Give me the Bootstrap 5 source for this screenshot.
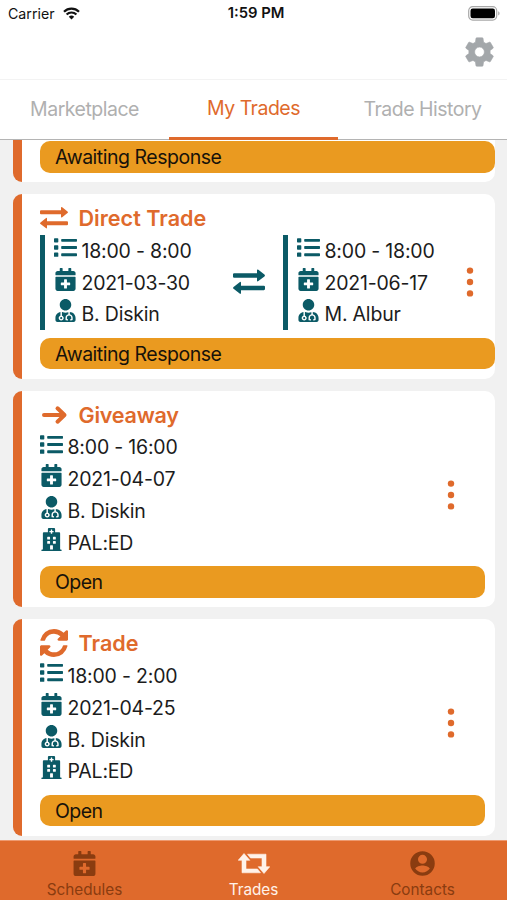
<!DOCTYPE html>
<html lang="en">
<head>
<meta charset="utf-8">
<meta name="viewport" content="width=device-width, initial-scale=1">
<title>My Trades</title>
<link href="https://cdn.jsdelivr.net/npm/bootstrap@5.3.0/dist/css/bootstrap.min.css" rel="stylesheet">
<style>
:root{--rust:#df6a2c;--teal:#0b5a66;--amber:#ea9a20}
body{font-family:Inter,"Liberation Sans",sans-serif;color:#1c1c1c;background:#f1f1f1}
svg{display:block;fill:currentColor;flex:none}
.screen{height:900px}
.status{height:27px;font-size:14.2px;color:#111;padding:0 7px 0 8px}
.status>div{flex:1 1 0}
.clock{font-size:14.8px;padding-left:4px}
.toolbar{height:53px;border-bottom:1px solid #f3f3f3;padding:0 13px 3px 0;color:#a3a7aa}
.tabs{height:60px}
.tabs a{flex:1 1 0;color:#b0b0b0;font-size:19.5px;letter-spacing:-.5px;line-height:58px;text-align:center;text-decoration:none;border-bottom:1px solid #b4b4b4;white-space:nowrap}
.tabs a.current{color:var(--rust);border-bottom:3px solid var(--rust);line-height:56px}
.feed{min-height:0;background:#f1f1f1}
.trade{margin:0 12px 12px 13px;border-left:9px solid var(--rust);border-radius:9px 10px 10px 9px;background:#fff;padding:8px 0 9.3px 18px}
.trade.cut{height:42px;padding-top:1.4px;border-top-left-radius:0;border-top-right-radius:0}
.heading{height:32.5px;gap:10.5px;color:var(--rust);font-weight:600;font-size:21.6px}
.heading.tight span{letter-spacing:-.25px}
.line{height:31.8px;font-size:19.5px;letter-spacing:-.2px;gap:4.500px;padding-top:2px;white-space:nowrap}
.line svg{color:var(--teal);margin-top:-8px}
.side{border-left:5px solid var(--teal);padding-left:9px}
.side.first{width:193px}
.side.second{margin-left:18px}
.between{color:var(--teal)}
.pill{height:31.5px;margin-top:8px;border-radius:10px;background:var(--amber);padding-left:15px;font-size:19.5px;letter-spacing:-.48px;line-height:32.500px;color:#17120a}
.pill.short{letter-spacing:-.6px}
.inset .pill{margin-right:10px}
.dots{color:var(--rust);margin-right:21px}
.inset .dots{margin-right:40.500px}
.bottom{height:60px;background:var(--rust);border-top:1px solid #ee9a70;color:#8a3c10;font-size:15.3px}
.bottom>div{flex:1 1 0;line-height:20px}
.bottom svg{margin:10px 0 4px}
.bottom .current{color:#fff2ea}
</style>
</head>
<body>
<svg width="0" height="0" class="position-absolute">
<defs>
<symbol id="list" viewBox="0 0 512 512"><path d="M80 368H16a16 16 0 0 0-16 16v64a16 16 0 0 0 16 16h64a16 16 0 0 0 16-16v-64a16 16 0 0 0-16-16zm0-320H16A16 16 0 0 0 0 64v64a16 16 0 0 0 16 16h64a16 16 0 0 0 16-16V64a16 16 0 0 0-16-16zm0 160H16a16 16 0 0 0-16 16v64a16 16 0 0 0 16 16h64a16 16 0 0 0 16-16v-64a16 16 0 0 0-16-16zm416 176H176a16 16 0 0 0-16 16v32a16 16 0 0 0 16 16h320a16 16 0 0 0 16-16v-32a16 16 0 0 0-16-16zm0-320H176a16 16 0 0 0-16 16v32a16 16 0 0 0 16 16h320a16 16 0 0 0 16-16V80a16 16 0 0 0-16-16zm0 160H176a16 16 0 0 0-16 16v32a16 16 0 0 0 16 16h320a16 16 0 0 0 16-16v-32a16 16 0 0 0-16-16z"/></symbol>
<symbol id="cal" viewBox="0 0 448 512"><path d="M436 160H12c-6.6 0-12-5.4-12-12v-36c0-26.5 21.5-48 48-48h48V12c0-6.600 5.400-12 12-12h40c6.600 0 12 5.400 12 12v52h128V12c0-6.600 5.400-12 12-12h40c6.600 0 12 5.400 12 12v52h48c26.500 0 48 21.500 48 48v36c0 6.600-5.400 12-12 12zM12 192h424c6.600 0 12 5.400 12 12v260c0 26.500-21.500 48-48 48H48c-26.500 0-48-21.500-48-48V204c0-6.600 5.400-12 12-12zm316 140c0-6.600-5.400-12-12-12h-60v-60c0-6.600-5.400-12-12-12h-40c-6.600 0-12 5.400-12 12v60h-60c-6.600 0-12 5.400-12 12v40c0 6.600 5.400 12 12 12h60v60c0 6.600 5.400 12 12 12h40c6.600 0 12-5.400 12-12v-60h60c6.600 0 12-5.400 12-12v-40z"/></symbol>
<symbol id="medic" viewBox="0 0 448 512"><path d="M224 256c70.700 0 128-57.300 128-128S294.700 0 224 0 96 57.300 96 128s57.300 128 128 128zM104 424c0 13.300 10.700 24 24 24s24-10.700 24-24-10.700-24-24-24-24 10.700-24 24zm216-135.400v49c36.500 7.400 64 39.800 64 78.400v41.700c0 7.600-5.400 14.200-12.900 15.700l-32.200 6.400c-4.300.9-8.500-1.900-9.400-6.300l-3.100-15.700c-.9-4.300 1.900-8.600 6.300-9.400l19.300-3.900V416c0-62.800-96-65.100-96 1.900v26.700l19.300 3.900c4.300.9 7.100 5.100 6.300 9.400l-3.100 15.700c-.9 4.300-5.100 7.100-9.400 6.300l-31.200-4.200c-7.900-1.100-13.800-7.800-13.800-15.900V416c0-38.600 27.500-70.900 64-78.400v-45.200c-2.200.7-4.400 1.100-6.600 1.900-18 6.300-37.300 9.800-57.400 9.800s-39.400-3.500-57.400-9.800c-7.400-2.600-14.900-4.200-22.600-5.200v81.600c23.100 6.900 40 28.100 40 53.400 0 30.900-25.100 56-56 56s-56-25.100-56-56c0-25.300 16.900-46.500 40-53.400v-80.400C48.500 301 0 355.800 0 422.400v44.800C0 491.900 20.100 512 44.800 512h358.400c24.700 0 44.800-20.100 44.800-44.800v-44.800c0-72-56.800-130.300-128-133.800z"/></symbol>
<symbol id="ward" viewBox="0 0 448 512"><path d="M448 492v20H0v-20c0-6.627 5.373-12 12-12h20V120c0-13.255 10.745-24 24-24h88V24c0-13.255 10.745-24 24-24h112c13.255 0 24 10.745 24 24v72h88c13.255 0 24 10.745 24 24v360h20c6.627 0 12 5.373 12 12zM308 192h-40c-6.627 0-12 5.373-12 12v40c0 6.627 5.373 12 12 12h40c6.627 0 12-5.373 12-12v-40c0-6.627-5.373-12-12-12zm-168 64h40c6.627 0 12-5.373 12-12v-40c0-6.627-5.373-12-12-12h-40c-6.627 0-12 5.373-12 12v40c0 6.627 5.373 12 12 12zm104 128h-40c-6.627 0-12 5.373-12 12v84h64v-84c0-6.627-5.373-12-12-12zm64-96h-40c-6.627 0-12 5.373-12 12v40c0 6.627 5.373 12 12 12h40c6.627 0 12-5.373 12-12v-40c0-6.627-5.373-12-12-12zm-116 12c0-6.627-5.373-12-12-12h-40c-6.627 0-12 5.373-12 12v40c0 6.627 5.373 12 12 12h40c6.627 0 12-5.373 12-12v-40zM182 96h26v26a6 6 0 0 0 6 6h20a6 6 0 0 0 6-6V96h26a6 6 0 0 0 6-6V70a6 6 0 0 0-6-6h-26V38a6 6 0 0 0-6-6h-20a6 6 0 0 0-6 6v26h-26a6 6 0 0 0-6 6v20a6 6 0 0 0 6 6z"/></symbol>
<symbol id="swap" viewBox="0 0 28 28"><path d="M1 6.300h20V3.900q0-1.500 1.200-.6l5.300 4.200q.9.800 0 1.600l-5.300 4.100q-1.200.9-1.200-.6V10.300H1q-1 0-1-1V7.300q0-1 1-1zM27 17.200H7v-2.400q0-1.500-1.200-.6L.5 18.400q-.9.800 0 1.600l5.300 4.100q1.200.9 1.200-.6V21.200h20q1 0 1-1v-2q0-1-1-1z"/></symbol>
<symbol id="sync" viewBox="0 128 1536 1536"><path d="M1511 1056q0 5-1 7-64 268-268 434.500t-478 166.500q-146 0-282.500-55t-243.500-157l-129 129q-19 19-45 19t-45-19-19-45v-448q0-26 19-45t45-19h448q26 0 45 19t19 45-19 45l-137 137q71 66 161 102t187 36q134 0 250-65t186-179q11-17 53-117 8-23 30-23h192q13 0 22.500 9.500t9.500 22.500zm25-800v448q0 26-19 45t-45 19h-448q-26 0-45-19t-19-45 19-45l138-138q-148-137-349-137-134 0-250 65t-186 179q-11 17-53 117-8 23-30 23h-199q-13 0-22.500-9.500t-9.500-22.500v-7q65-268 270-434.500t480-166.500q146 0 284 55.500t245 156.500l130-129q19-19 45-19t45 19 19 45z"/></symbol>
<symbol id="dots" viewBox="0 0 8 30"><circle cx="4" cy="3.600" r="3.200"/><circle cx="4" cy="15" r="3.200"/><circle cx="4" cy="26.400" r="3.200"/></symbol>
</defs>
</svg>

<main class="screen d-flex flex-column overflow-hidden">
  <header class="bg-white">
    <div class="status d-flex align-items-center">
      <div class="d-flex align-items-center gap-2"><span>Carrier</span>
        <svg width="17" height="13" viewBox="0 0 17 13"><path d="M8.500 12.600 5.800 9.700a4 4 0 0 1 5.400 0z"/><path d="M3.600 7.500a7 7 0 0 1 9.800 0M1 4.700a10.700 10.700 0 0 1 15 0" fill="none" stroke="currentColor" stroke-width="2.200"/></svg>
      </div>
      <span class="clock fw-semibold">1:59 PM</span>
      <div class="d-flex justify-content-end">
        <svg width="32" height="15" viewBox="0 0 32 15"><rect x=".7" y=".7" width="28" height="13.400" rx="4" fill="none" stroke="#a8a8a8" stroke-width="1.200"/><rect x="2.500" y="2.500" width="24.500" height="9.800" rx="2.200" fill="#000"/><path d="M30.200 5.200v4.400q1.400-.6 1.400-2.200t-1.400-2.200" fill="#a8a8a8"/></svg>
      </div>
    </div>
    <div class="toolbar d-flex align-items-center justify-content-end">
      <svg width="29" height="30" viewBox="2.200 2 19.600 20"><path d="M19.140 12.940c.04-.3.060-.61.060-.94 0-.32-.02-.64-.07-.94l2.030-1.580c.18-.14.230-.41.120-.61l-1.920-3.320c-.12-.22-.37-.29-.59-.22l-2.390.96c-.5-.38-1.030-.7-1.620-.94l-.36-2.540c-.04-.24-.24-.41-.48-.41h-3.840c-.24 0-.43.170-.47.410l-.36 2.540c-.59.240-1.130.570-1.620.94l-2.390-.96c-.22-.08-.47 0-.59.220L2.740 8.870c-.12.210-.08.470.12.610l2.030 1.580c-.05.3-.09.630-.09.940s.02.640.07.940l-2.030 1.580c-.18.140-.23.410-.12.610l1.920 3.320c.12.220.37.290.59.220l2.390-.96c.5.380 1.030.7 1.620.94l.36 2.540c.05.240.24.410.48.410h3.840c.24 0 .44-.17.470-.41l.36-2.540c.59-.24 1.130-.56 1.620-.94l2.390.96c.22.080.47 0 .59-.22l1.920-3.320c.12-.22.070-.47-.12-.61l-2.010-1.580zM12 15.300a3.300 3.300 0 1 1 0-6.600 3.300 3.300 0 0 1 0 6.600z" stroke="currentColor" stroke-width=".4"/></svg>
    </div>
    <nav class="tabs d-flex">
      <a href="#">Marketplace</a><a href="#" class="current">My Trades</a><a href="#">Trade History</a>
    </nav>
  </header>

  <section class="feed flex-grow-1 overflow-hidden">
    <article class="trade cut"><div class="pill mt-0">Awaiting Response</div></article>

    <article class="trade">
      <div class="heading d-flex align-items-center"><svg width="28" height="28"><use href="#swap"/></svg><span>Direct Trade</span></div>
      <div class="d-flex align-items-center">
        <div class="side first">
          <div class="line d-flex align-items-center"><svg width="23" height="23"><use href="#list"/></svg><span>18:00 - 8:00</span></div>
          <div class="line d-flex align-items-center"><svg width="23" height="23"><use href="#cal"/></svg><span>2021-03-30</span></div>
          <div class="line d-flex align-items-center"><svg width="23" height="23"><use href="#medic"/></svg><span>B. Diskin</span></div>
        </div>
        <svg class="between" width="32" height="32"><use href="#swap"/></svg>
        <div class="side second">
          <div class="line d-flex align-items-center"><svg width="23" height="23"><use href="#list"/></svg><span>8:00 - 18:00</span></div>
          <div class="line d-flex align-items-center"><svg width="23" height="23"><use href="#cal"/></svg><span>2021-06-17</span></div>
          <div class="line d-flex align-items-center"><svg width="23" height="23"><use href="#medic"/></svg><span>M. Albur</span></div>
        </div>
        <svg class="dots ms-auto" width="8" height="30"><use href="#dots"/></svg>
      </div>
      <div class="pill">Awaiting Response</div>
    </article>

    <article class="trade inset">
      <div class="heading tight d-flex align-items-center"><svg width="28" height="28" viewBox="0 0 28 28"><path d="M4 14h20M17.500 7.300l7 6.700-7 6.700" fill="none" stroke="currentColor" stroke-width="4" stroke-linecap="round" stroke-linejoin="round"/></svg><span>Giveaway</span></div>
      <div class="d-flex align-items-center justify-content-between">
        <div>
          <div class="line d-flex align-items-center"><svg width="23" height="23"><use href="#list"/></svg><span>8:00 - 16:00</span></div>
          <div class="line d-flex align-items-center"><svg width="23" height="23"><use href="#cal"/></svg><span>2021-04-07</span></div>
          <div class="line d-flex align-items-center"><svg width="23" height="23"><use href="#medic"/></svg><span>B. Diskin</span></div>
          <div class="line d-flex align-items-center"><svg width="23" height="23"><use href="#ward"/></svg><span>PAL:ED</span></div>
        </div>
        <svg class="dots" width="8" height="30"><use href="#dots"/></svg>
      </div>
      <div class="pill short">Open</div>
    </article>

    <article class="trade inset">
      <div class="heading d-flex align-items-center"><svg width="28" height="28"><use href="#sync"/></svg><span>Trade</span></div>
      <div class="d-flex align-items-center justify-content-between">
        <div>
          <div class="line d-flex align-items-center"><svg width="23" height="23"><use href="#list"/></svg><span>18:00 - 2:00</span></div>
          <div class="line d-flex align-items-center"><svg width="23" height="23"><use href="#cal"/></svg><span>2021-04-25</span></div>
          <div class="line d-flex align-items-center"><svg width="23" height="23"><use href="#medic"/></svg><span>B. Diskin</span></div>
          <div class="line d-flex align-items-center"><svg width="23" height="23"><use href="#ward"/></svg><span>PAL:ED</span></div>
        </div>
        <svg class="dots" width="8" height="30"><use href="#dots"/></svg>
      </div>
      <div class="pill short">Open</div>
    </article>
  </section>

  <footer class="bottom d-flex">
    <div class="d-flex flex-column align-items-center"><svg width="25" height="25"><use href="#cal"/></svg>Schedules</div>
    <div class="current d-flex flex-column align-items-center"><svg width="32" height="25" viewBox="0 0 32 25"><path d="M6 2.500l5.800 6.800H8V18h11.500l3 3.800H4V9.300H.2zM26 22.500l-5.800-6.800H24V7H12.500l-3-3.800H28v12.500h3.800z" stroke="currentColor" stroke-width=".6" stroke-linejoin="round"/></svg>Trades</div>
    <div class="d-flex flex-column align-items-center"><svg width="25" height="25" viewBox="1.800 1.800 20.400 20.400"><path fill-rule="evenodd" d="M12 2a10 10 0 1 0 0 20 10 10 0 0 0 0-20zm0 2.900a3.700 3.700 0 1 1 0 7.400 3.700 3.700 0 0 1 0-7.400zm0 14.500c-2.500 0-4.710-1.280-6-3.220.8-1.900 4-2.600 6-2.600s5.200.7 6 2.600c-1.290 1.940-3.500 3.220-6 3.220z"/></svg>Contacts</div>
  </footer>
</main>
<script src="https://cdn.jsdelivr.net/npm/bootstrap@5.3.0/dist/js/bootstrap.bundle.min.js"></script>
</body>
</html>
